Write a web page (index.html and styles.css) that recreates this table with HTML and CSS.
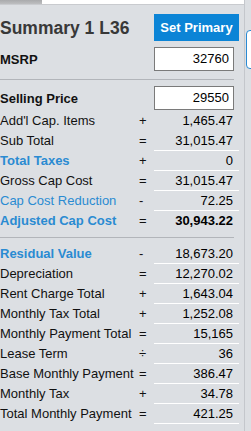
FILE: index.html
```html
<!DOCTYPE html>
<html>
<head>
<meta charset="utf-8">
<link rel="stylesheet" href="styles.css">
</head>
<body>
<div class="wrap">
  <div class="panel">
    <div class="tabs"><div class="tab"></div></div>
    <div class="head">
      <h1 class="title">Summary 1 L36</h1>
      <button class="btn">Set Primary</button>
    </div>
    <div class="field">
      <span class="flabel">MSRP</span>
      <div class="inp">32760</div>
    </div>
    <div class="sep"></div>
    <div class="field sell">
      <span class="flabel">Selling Price</span>
      <div class="inp">29550</div>
    </div>
    <div class="rows">
      <div class="row"><span class="lbl">Add'l Cap. Items</span><span class="op">+</span><span class="val">1,465.47</span></div>
      <div class="row"><span class="lbl">Sub Total</span><span class="op">=</span><span class="val ul">31,015.47</span></div>
      <div class="row"><span class="lbl blue bold">Total Taxes</span><span class="op">+</span><span class="val ul">0</span></div>
      <div class="row"><span class="lbl">Gross Cap Cost</span><span class="op">=</span><span class="val ul">31,015.47</span></div>
      <div class="row"><span class="lbl blue">Cap Cost Reduction</span><span class="op">-</span><span class="val ul">72.25</span></div>
      <div class="row"><span class="lbl blue bold">Adjusted Cap Cost</span><span class="op">=</span><span class="val bold">30,943.22</span></div>
    </div>
    <div class="sep"></div>
    <div class="rows">
      <div class="row"><span class="lbl blue bold">Residual Value</span><span class="op">-</span><span class="val ul">18,673.20</span></div>
      <div class="row"><span class="lbl">Depreciation</span><span class="op">=</span><span class="val ul">12,270.02</span></div>
      <div class="row"><span class="lbl">Rent Charge Total</span><span class="op">+</span><span class="val ul">1,643.04</span></div>
      <div class="row"><span class="lbl">Monthly Tax Total</span><span class="op">+</span><span class="val ul">1,252.08</span></div>
      <div class="row"><span class="lbl">Monthly Payment Total</span><span class="op">=</span><span class="val ul">15,165</span></div>
      <div class="row"><span class="lbl">Lease Term</span><span class="op">÷</span><span class="val ul">36</span></div>
      <div class="row"><span class="lbl">Base Monthly Payment</span><span class="op">=</span><span class="val ul">386.47</span></div>
      <div class="row"><span class="lbl">Monthly Tax</span><span class="op">+</span><span class="val ul">34.78</span></div>
      <div class="row"><span class="lbl">Total Monthly Payment</span><span class="op">=</span><span class="val ul">421.25</span></div>
    </div>
  </div>
  <div class="side"><div class="bluebox"></div></div>
</div>
</body>
</html>
```

FILE: styles.css
```css
html, body {
  margin: 0;
  padding: 0;
  overflow: hidden;
  background: #dcdfe3;
}
body {
  font-family: "Liberation Sans", Arial, sans-serif;
  font-size: 13px;
  color: #111;
}
.wrap {
  display: flex;
  width: 251px;
  height: 431px;
  overflow: hidden;
}
.panel {
  width: 244px;
  flex: none;
  border-right: 1px solid #c4c7cc;
}
.tabs {
  height: 4px;
  background: #fff;
  border-bottom: 1px solid #c9cbcf;
  display: flex;
}
.tab {
  width: 42px;
  background: linear-gradient(#a9aaac, #bdbec0);
}
.head {
  margin-top: 9px;
  width: 239px;
  height: 27px;
  display: flex;
  justify-content: space-between;
  align-items: flex-start;
}
.title {
  margin: 0;
  padding-top: 1px;
  font-size: 17.5px;
  line-height: 27px;
  font-weight: bold;
  color: #383838;
}
.btn {
  width: 85px;
  height: 27px;
  margin: 0;
  padding: 0;
  border: none;
  background: #0b84d6;
  color: #fff;
  font-family: "Liberation Sans", Arial, sans-serif;
  font-size: 13px;
  font-weight: bold;
}
.field {
  margin-top: 6px;
  width: 234px;
  display: flex;
  justify-content: space-between;
  align-items: center;
}
.field.sell {
  margin-top: 6px;
  margin-bottom: 1px;
}
.flabel {
  font-weight: bold;
}
.inp {
  box-sizing: border-box;
  width: 80px;
  height: 24px;
  border: 1px solid #7a7a7a;
  background: #fff;
  text-align: right;
  padding: 0 4px;
  line-height: 22px;
  color: #000;
}
.sep {
  width: 234px;
  height: 1px;
  background: #b2b5ba;
  margin: 6px 0;
}
.field + .sep {
  margin-top: 8px;
}
.rows {
  width: 239px;
}
.row {
  display: grid;
  grid-template-columns: 139px 15px 85px;
  height: 20px;
}
.lbl, .op, .val {
  line-height: 19px;
  white-space: nowrap;
}
.val {
  box-sizing: border-box;
  height: 20px;
  text-align: right;
  padding-right: 6px;
  color: #000;
}
.val.ul {
  border-bottom: 1px solid #fff;
}
.blue {
  color: #2a8bd2;
}
.bold {
  font-weight: bold;
}
.side {
  flex: 1;
  overflow: hidden;
}
.bluebox {
  margin-top: 30px;
  margin-left: 1px;
  width: 40px;
  height: 39px;
  box-sizing: border-box;
  border: 1px solid #2a8ad3;
  border-radius: 4px;
  background: #fff;
}
```
